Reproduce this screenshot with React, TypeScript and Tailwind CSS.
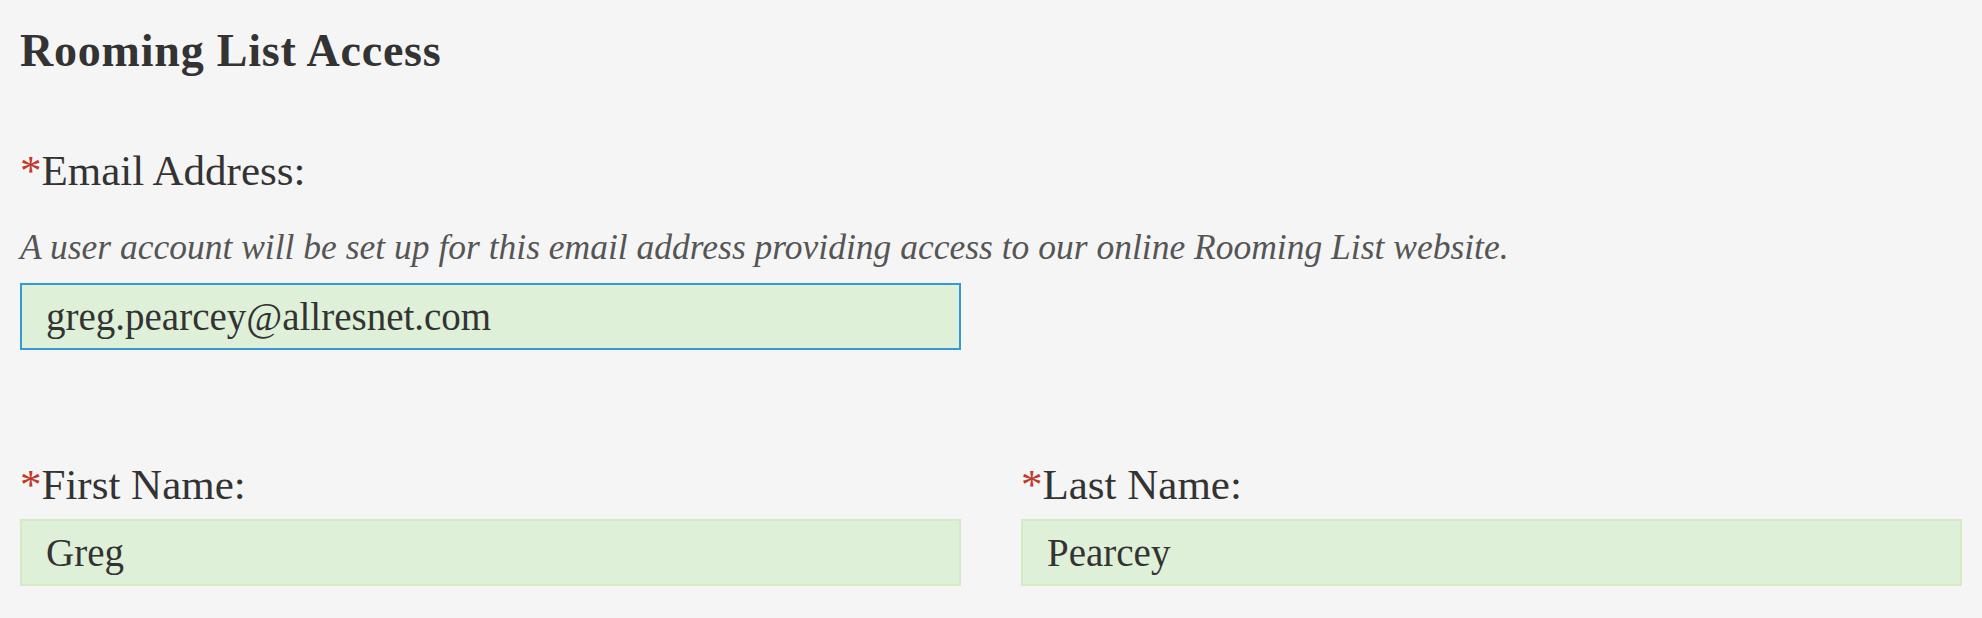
import { useEffect, useRef } from 'react'

const serif = "font-['Liberation_Serif','Times_New_Roman',serif]"

function Label({ text }: { text: string }) {
  return (
    <label className={`block text-[43px] leading-none text-[#333333] ${serif}`}>
      <span className="text-[#c0392b]">*</span>
      {text}
    </label>
  )
}

export default function App() {
  const emailRef = useRef<HTMLInputElement>(null)

  useEffect(() => {
    const el = emailRef.current
    if (el) {
      el.focus()
      el.setSelectionRange(12, 12)
    }
  }, [])

  const inputBase =
    `w-full h-[67px] px-[24px] text-[39px] text-[#333333] bg-[#dff0d8] outline-none ${serif}`

  return (
    <div className={`min-h-screen bg-[#f5f5f5] px-[20px] pt-[28px] ${serif}`}>
      <h2 className="text-[46px] leading-none font-bold tracking-[0.8px] text-[#333333]">Rooming List Access</h2>

      {/* Email */}
      <div className="mt-[75px]">
        <Label text="Email Address:" />
        <p className="mt-[38px] text-[35.5px] leading-none italic text-[#555555]">
          A user account will be set up for this email address providing access to our online Rooming List website.
        </p>
        <div className="grid grid-cols-2 gap-[60px] mt-[17px]">
          <input
            ref={emailRef}
            defaultValue="greg.pearcey@allresnet.com"
            className={`${inputBase} border-2 border-[#3498db] caret-[#333333]`}
          />
        </div>
      </div>

      {/* Names */}
      <div className="grid grid-cols-2 gap-[60px] mt-[113px]">
        <div>
          <Label text="First Name:" />
          <input defaultValue="Greg" className={`${inputBase} mt-[13px] border-2 border-[#d6e9c6]`} />
        </div>
        <div>
          <Label text="Last Name:" />
          <input defaultValue="Pearcey" className={`${inputBase} mt-[13px] border-2 border-[#d6e9c6]`} />
        </div>
      </div>
    </div>
  )
}
